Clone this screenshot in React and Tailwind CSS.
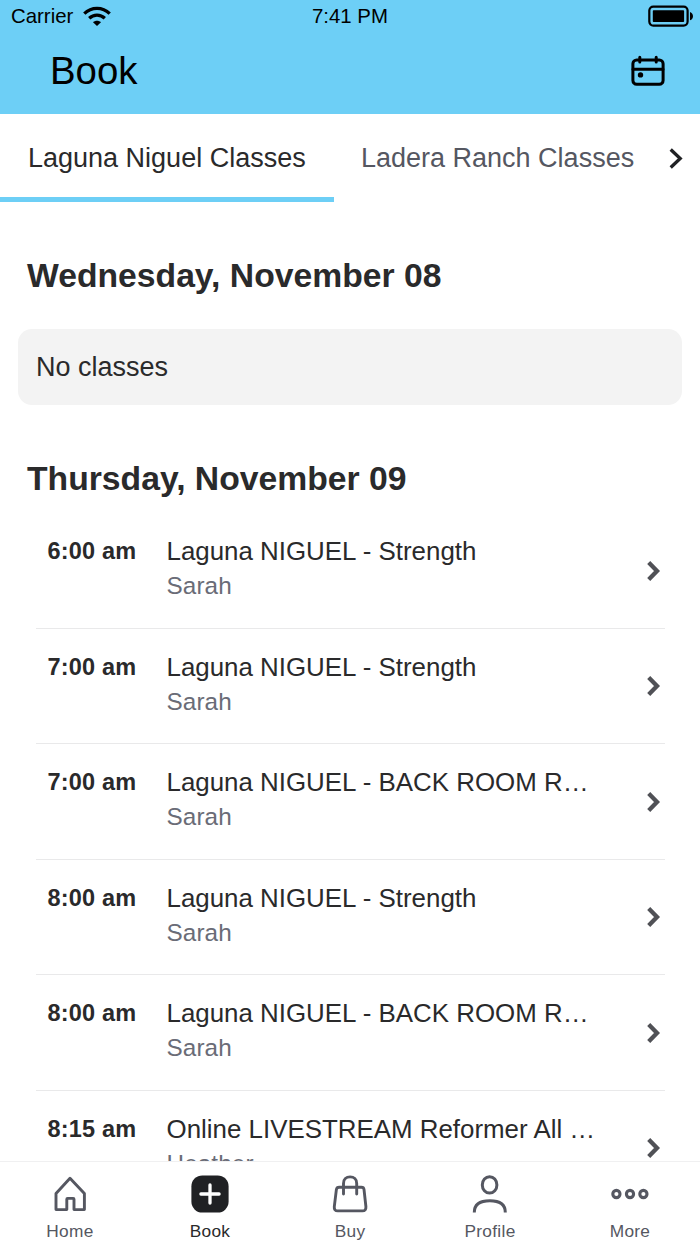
const classes = [
  { id: 1, time: "6:00 am", title: "Laguna NIGUEL - Strength", coach: "Sarah" },
  { id: 2, time: "7:00 am", title: "Laguna NIGUEL - Strength", coach: "Sarah" },
  { id: 3, time: "7:00 am", title: "Laguna NIGUEL - BACK ROOM R…", coach: "Sarah" },
  { id: 4, time: "8:00 am", title: "Laguna NIGUEL - Strength", coach: "Sarah" },
  { id: 5, time: "8:00 am", title: "Laguna NIGUEL - BACK ROOM R…", coach: "Sarah" },
  { id: 6, time: "8:15 am", title: "Online LIVESTREAM Reformer All …", coach: "Heather" },
];

const navItems = [
  { label: "Home", Icon: HomeIcon },
  { label: "Book", Icon: BookIcon, active: true },
  { label: "Buy", Icon: BagIcon },
  { label: "Profile", Icon: ProfileIcon },
  { label: "More", Icon: MoreIcon },
];

function WifiIcon() {
  return (
    <svg width="28" height="20" viewBox="0 0 28 20" fill="none" stroke="#000" strokeWidth="3.3">
      <path d="M1.3 7.6C8.5 0.6 19.5 0.6 26.7 7.6" />
      <path d="M6.2 12.3C10.7 8.1 17.3 8.1 21.8 12.3" />
      <path d="M10 16.2C12.3 14.2 15.7 14.2 18 16.2L14 20Z" fill="#000" stroke="none" />
    </svg>
  );
}

function BatteryIcon() {
  return (
    <svg width="46" height="22" viewBox="0 0 46 22">
      <rect x="1.3" y="1.6" width="38.3" height="19" rx="4" fill="none" stroke="#000" strokeWidth="2.2" />
      <rect x="4.8" y="5.2" width="31.3" height="11.8" rx="0.8" />
      <path d="M42 6.9C46 8.5 46 13.7 42 15.3Z" />
    </svg>
  );
}

function CalendarIcon() {
  return (
    <svg width="34" height="32" viewBox="0 0 34 32" fill="none" stroke="#000" strokeWidth="3" strokeLinecap="round">
      <rect x="1.9" y="5" width="30.2" height="24.3" rx="3.8" />
      <path d="M2 14.2H32M8.8 2.2V7M25.2 2.2V7" />
      <circle cx="9.5" cy="19.9" r="2.7" fill="#000" stroke="none" />
    </svg>
  );
}

function HomeIcon() {
  return (
    <svg width="38" height="38" viewBox="0 0 38 38" fill="none" stroke="currentColor" strokeWidth="2.9" strokeLinejoin="round">
      <path d="M19 3.2L33.4 18.4V34.6H23V24.2Q23 23.4 22.2 23.4H16.6Q15.8 23.4 15.8 24.2V34.6H5V18.4Z" />
    </svg>
  );
}

function BookIcon() {
  return (
    <svg width="38" height="38" viewBox="0 0 38 38">
      <rect x="0.4" y="0.4" width="37.2" height="37.2" rx="11" fill="#202124" />
      <path d="M19 9.9V28.1M9.9 19H28.1" stroke="#fff" strokeWidth="3.3" strokeLinecap="round" />
    </svg>
  );
}

function BagIcon() {
  return (
    <svg width="38" height="38" viewBox="0 0 38 38" fill="none" stroke="currentColor" strokeWidth="2.9" strokeLinecap="round">
      <path d="M8.2 12.2H30.4Q32.7 12.2 33 14.4L34.9 31.6Q35.2 35.9 31.4 35.9H6.8Q2.9 35.9 3.3 31.6L5.4 14.4Q5.8 12.2 8.2 12.2Z" />
      <path d="M12.5 19V8.4C12.5 4.4 15.3 1.9 19.1 1.9S25.7 4.4 25.7 8.4V19" />
    </svg>
  );
}

function ProfileIcon() {
  return (
    <svg width="38" height="38" viewBox="0 0 38 38" fill="none" stroke="currentColor" strokeWidth="3">
      <ellipse cx="18.6" cy="9.9" rx="7.3" ry="8.2" />
      <path d="M3.3 37.4C3.3 29 9.3 25.8 18.8 25.8S34.3 29 34.3 37.4" />
    </svg>
  );
}

function MoreIcon() {
  return (
    <svg width="38" height="38" viewBox="0 0 38 38" fill="none" stroke="currentColor" strokeWidth="3.1">
      <circle cx="5.4" cy="19" r="3.6" />
      <circle cx="19" cy="19" r="3.6" />
      <circle cx="32.4" cy="19" r="3.6" />
    </svg>
  );
}

function ClassRow({ item }) {
  return (
    <div className="flex h-[115.5px] shrink-0 border-b border-[#e9e9ea] pt-[22px] pr-1 pl-3 last:border-b-0">
      <div className="w-[119px] shrink-0 text-[23.5px] leading-[32px] font-bold tracking-[0.2px]">{item.time}</div>
      <div className="min-w-0 flex-1 whitespace-nowrap">
        <div className="text-[25.9px] leading-[33px]">{item.title}</div>
        <div className="text-[24.3px] leading-[36.5px] tracking-[0.1px] text-[#6a6c77]">{item.coach}</div>
      </div>
      <svg className="mt-[25.5px] shrink-0" width="14" height="20" viewBox="0 0 14 20" fill="none" stroke="#505156" strokeWidth="4.3">
        <path d="M1.7 1.6L10 10L1.7 18.4" />
      </svg>
    </div>
  );
}

export default function App() {
  return (
    <div className="flex h-[1244px] w-[700px] flex-col overflow-hidden bg-white font-['Liberation_Sans',Arial,sans-serif] text-[#2a2a2b]">
      <header className="h-[114px] shrink-0 bg-[#6dcff6] text-black">
        <div className="grid h-8 grid-cols-3 items-center text-[20.4px] leading-[32px]">
          <div className="flex items-center gap-[10px] pl-[11px]">
            <span>Carrier</span>
            <WifiIcon />
          </div>
          <div className="-mt-px text-center">7:41 PM</div>
          <div className="flex justify-end pr-[6px]">
            <BatteryIcon />
          </div>
        </div>
        <div className="flex items-center justify-between pt-[15px] pr-[35px] pl-[50px]">
          <h1 className="text-[38.4px] leading-[48px]">Book</h1>
          <CalendarIcon />
        </div>
      </header>

      <div className="flex h-[88px] shrink-0 text-[27px] leading-[88px] whitespace-nowrap">
        <div className="w-[333.5px] border-b-[5px] border-[#6dcff6] pl-[28px]">Laguna Niguel Classes</div>
        <div className="w-[335.5px] pl-[27.5px] text-[#555761]">Ladera Ranch Classes</div>
        <svg className="mt-[34px]" width="14" height="21" viewBox="0 0 14 21" fill="none" stroke="#202124" strokeWidth="3.3">
          <path d="M1.7 1.5L11.2 10.5L1.7 19.5" />
        </svg>
      </div>

      <main className="min-h-0 flex-1 overflow-hidden px-[18px]">
        <h2 className="pt-[52.5px] pl-[9px] text-[33.7px] leading-[40px] font-bold">Wednesday, November 08</h2>
        <div className="mt-[34px] h-[76.5px] rounded-[14px] bg-[#f3f3f3] pl-[18px] text-[27px] leading-[76px]">
          No classes
        </div>
        <h2 className="pt-[53px] pl-[9px] text-[33.7px] leading-[40px] font-bold">Thursday, November 09</h2>
        <div className="mx-[17.5px] mt-[15px] flex flex-col">
          {classes.map((item) => (
            <ClassRow key={item.id} item={item} />
          ))}
        </div>
      </main>

      <nav className="grid h-[83px] shrink-0 grid-cols-5 border-t border-[#f0f0f1] bg-white">
        {navItems.map(({ label, Icon, active }) => (
          <div
            key={label}
            className={`flex flex-col items-center pt-[12.5px] ${active ? "text-[#2a2a2b]" : "text-[#555761]"}`}
          >
            <Icon />
            <span className="mt-[6.5px] text-[17.3px] leading-[24px] tracking-[0.3px]">{label}</span>
          </div>
        ))}
      </nav>
    </div>
  );
}
